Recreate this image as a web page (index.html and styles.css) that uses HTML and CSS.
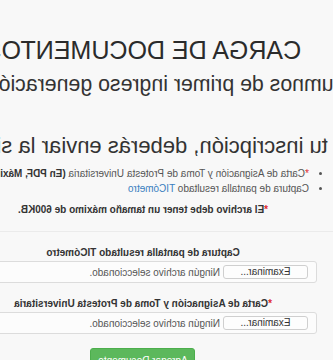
FILE: index.html
```html
<!DOCTYPE html>
<html lang="es">
<head>
    <meta charset="UTF-8">
    <title>Carga de documentos</title>
    <link rel="stylesheet" href="styles.css">
</head>
<body>
    <div class="mirror">
        <div class="sheet">
            <h1 class="title">CARGA DE DOCUMENTOS</h1>
            <p class="subtitle">Alumnos de primer ingreso generación 2019</p>
            <p class="intro">Para completar tu inscripción, deberás enviar la siguiente documentación:</p>
            <ul class="docs">
                <li><span class="req">*</span>Carta de Asignación y Toma de Protesta Universitaria <b>(En PDF, Máximo 600KB)</b></li>
                <li>Captura de pantalla resultado <a href="#" class="link">TICómetro</a></li>
            </ul>
            <p class="limit"><span class="req">*</span>El archivo debe tener un tamaño máximo de 600KB.</p>
            <div class="divider"></div>
            <form class="upload-form">
                <div class="field">
                    <label class="field-label">Captura de pantalla resultado TICómetro</label>
                    <div class="file-box">
                        <button type="button" class="file-btn">Examinar...</button>
                        <span class="file-name">Ningún archivo seleccionado.</span>
                    </div>
                </div>
                <div class="field">
                    <label class="field-label"><span class="req">*</span>Carta de Asignación y Toma de Protesta Universitaria</label>
                    <div class="file-box">
                        <button type="button" class="file-btn">Examinar...</button>
                        <span class="file-name">Ningún archivo seleccionado.</span>
                    </div>
                </div>
                <div class="actions">
                    <button type="button" class="btn-success">Agregar Documento</button>
                </div>
            </form>
        </div>
    </div>
</body>
</html>
```

FILE: styles.css
```css
html, body {
    margin: 0;
    background-color: #f8f8f8;
}
body {
    font-family: "Liberation Sans", Arial, sans-serif;
    color: #333;
}
.mirror {
    width: 333px;
    height: 360px;
    overflow: hidden;
    transform: scaleX(-1);
}
.sheet {
    width: 348px;
    margin-left: 16px;
    padding-top: 37px;
}
.title {
    display: flex;
    justify-content: center;
    white-space: nowrap;
    margin: 0;
    font-size: 25px;
    line-height: 26px;
    font-weight: normal;
    color: #2b2b2b;
}
.subtitle {
    display: flex;
    justify-content: center;
    white-space: nowrap;
    margin: 9px 0 0 0;
    font-size: 21.3px;
    line-height: 25px;
    color: #333;
}
.intro {
    display: flex;
    justify-content: center;
    white-space: nowrap;
    margin: 36px 0 0 0;
    padding-left: 40px;
    font-size: 22px;
    line-height: 26px;
    color: #333;
}
.docs {
    margin: 7px 0 0 0;
    padding-left: 8px;
    font-size: 10px;
    line-height: 15px;
    color: #555;
    white-space: nowrap;
}
.docs b {
    color: #333;
}
.link {
    color: #3a7fc0;
    text-decoration: none;
}
.req {
    color: #e0262b;
}
.limit {
    margin: 6px 0 0 0;
    text-align: center;
    font-size: 10px;
    line-height: 15px;
    font-weight: bold;
    color: #333;
    white-space: nowrap;
}
.divider {
    margin: 14px -40px 0 -40px;
    border-top: 1px solid #ebebeb;
}
.field {
    margin-top: 13px;
}
.field-label {
    display: block;
    text-align: center;
    font-size: 10px;
    line-height: 15px;
    font-weight: bold;
    color: #333;
    white-space: nowrap;
}
.file-box {
    display: flex;
    align-items: center;
    height: 22px;
    box-sizing: border-box;
    margin-top: 1px;
    padding-left: 8px;
    border: 1px solid #dcdcdc;
    border-radius: 3px;
    background-color: #fcfcfc;
}
.file-btn {
    width: 85px;
    height: 14px;
    padding: 0;
    border: 1px solid #cfcfcf;
    border-radius: 3px;
    background-color: #fdfdfd;
    font-family: "Liberation Sans", Arial, sans-serif;
    font-size: 10px;
    line-height: 12px;
    color: #333;
}
.file-name {
    margin-left: 3px;
    font-size: 10px;
    color: #555;
    white-space: nowrap;
}
.actions {
    display: flex;
    justify-content: center;
    margin-top: 14px;
}
.btn-success {
    width: 105px;
    height: 24px;
    padding: 0;
    border: 1px solid #4cae4c;
    border-radius: 3px;
    background-color: #5cb85c;
    color: #fff;
    font-family: "Liberation Sans", Arial, sans-serif;
    font-size: 10px;
}
```
